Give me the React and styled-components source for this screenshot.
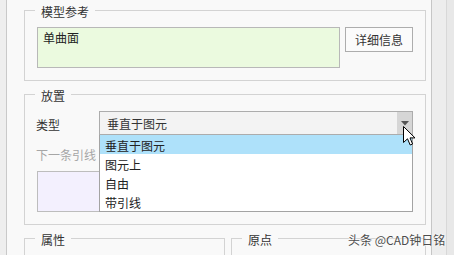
import React from "react";
import styled, { createGlobalStyle } from "styled-components";

const Global = createGlobalStyle`
  html, body { margin: 0; padding: 0; background: #f9f9f9; }
  body { font-family: "Noto Sans CJK SC", "Noto Sans", sans-serif; font-size: 12px; color: #333; }
`;

const Screen = styled.div`
  position: relative;
  display: flex;
  width: 454px;
  height: 255px;
  overflow: hidden;
  background: #f9f9f9;
`;

const LeftStrip = styled.div`
  flex: 0 0 6px;
  background: #eeeeee;
  border-right: 1px solid #c9c9c9;
`;

const RightStrip = styled.div`
  flex: 0 0 22px;
  border-left: 1px solid #c6c6c6;
  background: linear-gradient(to right, #ededed 0 14px, #d8d8d8 14px 15px, #e8e8e8 15px);
`;

const Panel = styled.div`
  flex: 1;
  display: flex;
  flex-direction: column;
  gap: 3px;
  padding: 0 5px 0 17px;
  min-width: 0;
`;

const Group = styled.fieldset`
  margin: 0;
  min-width: 0;
  border: 1px solid #d3d3d3;
  padding: 7px 12px 12px 12px;
`;

const Legend = styled.legend`
  margin-left: -2px;
  padding: 4px 6px 0 6px;
  line-height: 16px;
  font-size: 12px;
  color: #333;
`;

const RefRow = styled.div`
  display: flex;
  align-items: flex-start;
  gap: 5px;
`;

const RefBox = styled.div`
  flex: 1;
  height: 41px;
  box-sizing: border-box;
  border: 1px solid #b8b8b8;
  background: #ebfadf;
  padding: 2px 5px;
  line-height: 16px;
  color: #222;
`;

const Button = styled.button`
  width: 68px;
  height: 25px;
  box-sizing: border-box;
  border: 1px solid #adadad;
  background: #fbfbfb;
  font-family: inherit;
  font-size: 12px;
  color: #333;
  padding: 0;
  line-height: 22px;
`;

const FieldRow = styled.div`
  display: flex;
  align-items: center;
`;

const Label = styled.div`
  flex: 0 0 ${(p) => (p.$wide ? "auto" : "63px")};
  margin-left: -1px;
  line-height: 18px;
  padding-top: ${(p) => (p.$muted ? "0" : "3px")};
  color: ${(p) => (p.$muted ? "#a6a6a6" : "#333")};
  margin-top: ${(p) => (p.$muted ? "11px" : "0")};
`;

const SelectWrap = styled.div`
  position: relative;
  flex: 1;
`;

const SelectBox = styled.div`
  display: flex;
  height: 24px;
  box-sizing: border-box;
  border: 1px solid #acacac;
  background: #f3f3f3;
  color: #333;
`;

const SelectText = styled.span`
  flex: 1;
  padding: 2px 0 0 7px;
  line-height: 20px;
`;

const ArrowBtn = styled.span`
  flex: 0 0 15px;
  background: #d6d6d6;
  display: flex;
  align-items: center;
  justify-content: center;
`;

const DropList = styled.ul`
  position: absolute;
  left: 0;
  right: 0;
  top: 24px;
  margin: 0;
  padding: 0;
  list-style: none;
  background: #fff;
  border: 1px solid #a3a3a3;
  border-top: none;
  z-index: 2;
`;

const DropItem = styled.li`
  height: 19px;
  box-sizing: border-box;
  padding: 1px 0 0 5px;
  line-height: 19px;
  overflow: hidden;
  color: #222;
  background: ${(p) => (p.$active ? "#aee1fa" : "transparent")};
`;

const Cursor = styled.svg`
  position: absolute;
  left: 304px;
  top: 15px;
  z-index: 3;
`;

const LeaderBox = styled.div`
  margin-top: 7px;
  height: 41px;
  box-sizing: border-box;
  border: 1px solid #bdbdbd;
  background: #f3f0fe;
`;

const SplitRow = styled.div`
  display: grid;
  grid-template-columns: 201px 1fr;
  gap: 6px;
`;

const EmptyGroup = styled(Group)`
  height: 60px;
`;

const Watermark = styled.div`
  position: absolute;
  left: 348px;
  top: 231px;
  font-size: 12px;
  line-height: 18px;
  color: #4d4d4d;
  text-shadow: 0 0 2px #fff, 0 0 2px #fff;
  white-space: nowrap;
  z-index: 4;
`;

const items = ["垂直于图元", "图元上", "自由", "带引线"];

export default function App() {
  return (
    <Screen>
      <Global />
      <LeftStrip />
      <Panel>
        <Group>
          <Legend>模型参考</Legend>
          <RefRow>
            <RefBox>单曲面</RefBox>
            <Button>详细信息</Button>
          </RefRow>
        </Group>
        <Group>
          <Legend>放置</Legend>
          <FieldRow>
            <Label>类型</Label>
            <SelectWrap>
              <SelectBox>
                <SelectText>垂直于图元</SelectText>
                <ArrowBtn>
                  <svg width="8" height="5" viewBox="0 0 8 5">
                    <path d="M0 0 L8 0 L4 4.5 Z" fill="#555" />
                  </svg>
                </ArrowBtn>
              </SelectBox>
              <DropList>
                {items.map((t, i) => (
                  <DropItem key={t} $active={i === 0}>
                    {t}
                  </DropItem>
                ))}
              </DropList>
              <Cursor width="13" height="20" viewBox="0 0 13 20">
                <path
                  d="M0.5 0.5 L0.5 16.5 L4.5 12.8 L7.2 19 L9.6 18 L7 11.9 L12 11.9 Z"
                  fill="#fff"
                  stroke="#000"
                  strokeWidth="1"
                  strokeLinejoin="miter"
                />
              </Cursor>
            </SelectWrap>
          </FieldRow>
          <Label $muted $wide>下一条引线</Label>
          <LeaderBox />
        </Group>
        <SplitRow>
          <EmptyGroup>
            <Legend>属性</Legend>
          </EmptyGroup>
          <EmptyGroup>
            <Legend>原点</Legend>
          </EmptyGroup>
        </SplitRow>
      </Panel>
      <RightStrip />
      <Watermark>头条 @CAD钟日铭</Watermark>
    </Screen>
  );
}
